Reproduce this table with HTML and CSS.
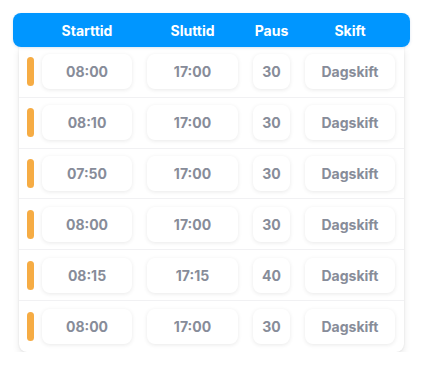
FILE: index.html
```html
<!DOCTYPE html>
<html lang="sv">
<head>
<meta charset="utf-8">
<link rel="stylesheet" href="styles.css">
</head>
<body>
<div class="table">
  <div class="head">
    <div class="hcell">Starttid</div>
    <div class="hcell">Sluttid</div>
    <div class="hcell">Paus</div>
    <div class="hcell">Skift</div>
  </div>
  <div class="body">
    <div class="row"><span class="bar"></span><div class="box">08:00</div><div class="box">17:00</div><div class="box">30</div><div class="box">Dagskift</div></div>
    <div class="row"><span class="bar"></span><div class="box">08:10</div><div class="box">17:00</div><div class="box">30</div><div class="box">Dagskift</div></div>
    <div class="row"><span class="bar"></span><div class="box">07:50</div><div class="box">17:00</div><div class="box">30</div><div class="box">Dagskift</div></div>
    <div class="row"><span class="bar"></span><div class="box">08:00</div><div class="box">17:00</div><div class="box">30</div><div class="box">Dagskift</div></div>
    <div class="row"><span class="bar"></span><div class="box">08:15</div><div class="box">17:15</div><div class="box">40</div><div class="box">Dagskift</div></div>
    <div class="row"><span class="bar"></span><div class="box">08:00</div><div class="box">17:00</div><div class="box">30</div><div class="box">Dagskift</div></div>
  </div>
</div>
</body>
</html>
```
FILE: styles.css
```css
html, body {
  margin: 0;
  padding: 0;
  background: #ffffff;
}
body {
  font-family: Inter, "Noto Sans", sans-serif;
  padding: 13px 13px 0 13px;
}
.table {
  width: 397px;
}
.head {
  height: 34px;
  background: #0096ff;
  border-radius: 8px;
  display: grid;
  grid-template-columns: 90px 91px 37px 90px;
  column-gap: 15px;
  padding-left: 29px;
  align-items: center;
  position: relative;
  z-index: 1;
  box-shadow: 0 1px 3px rgba(0, 80, 160, 0.15);
}
.hcell {
  color: #ffffff;
  font-weight: 700;
  font-size: 14px;
  text-align: center;
  white-space: nowrap;
}
.body {
  margin: 0 6px;
  background: #ffffff;
  border-radius: 0 0 8px 8px;
  box-shadow: 0 4px 7px rgba(0, 0, 0, 0.09), 0 0 2px rgba(0, 0, 0, 0.09);
}
.row {
  height: 50.8px;
  box-sizing: border-box;
  display: flex;
  gap: 15px;
  padding-left: 8px;
  align-items: center;
  border-bottom: 1px solid #f1f1f3;
}
.row:last-child {
  border-bottom: none;
}
.bar {
  flex: none;
  width: 7px;
  height: 29px;
  border-radius: 4px;
  background: #f6ac44;
  margin-right: -7px;
}
.box {
  flex: none;
  width: 90px;
  height: 35px;
  border-radius: 8px;
  background: #ffffff;
  box-shadow: 0 1px 4px rgba(0, 0, 0, 0.09);
  display: flex;
  align-items: center;
  justify-content: center;
  color: #878c99;
  font-weight: 700;
  font-size: 14px;
}
.box:nth-child(3) {
  width: 91px;
}
.box:nth-child(4) {
  width: 37px;
}
```
